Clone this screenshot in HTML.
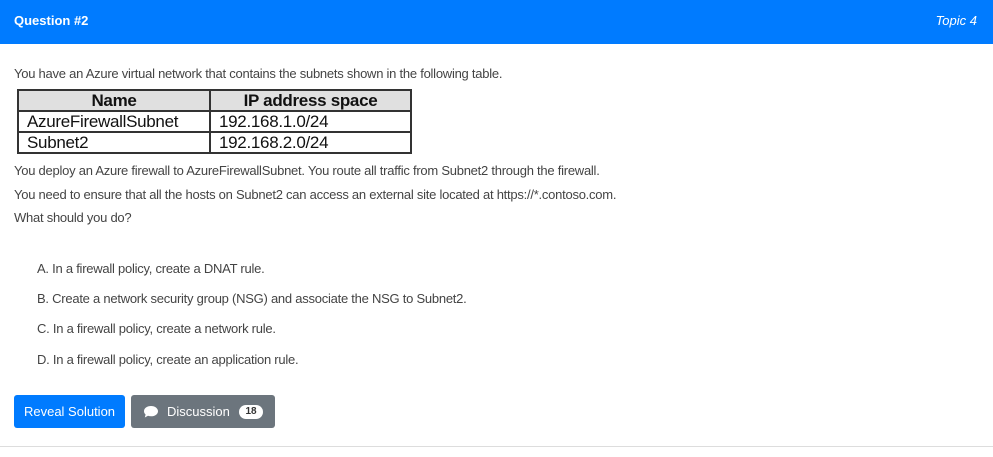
<!DOCTYPE html>
<html><head><style>
body{margin:0;width:993px;height:457px;background:#fff;font-family:"Liberation Sans",sans-serif;color:#444;overflow:hidden;position:relative}
.hdr{position:absolute;left:0;top:0;width:993px;height:44px;background:#007bff;color:#fff;font-size:13px}
.hdr .l{position:absolute;left:14px;top:13px;font-weight:bold}
.hdr .r{position:absolute;right:16px;top:13px;font-style:italic}
.t{position:absolute;left:14px;font-size:13px;white-space:nowrap;letter-spacing:-0.25px}
table{position:absolute;left:17px;top:89px;border-collapse:collapse;font-size:17px;color:#111;width:395px}
td{border:2px solid #333;padding:0 0 0 8px;height:19px;line-height:19px;letter-spacing:-0.3px}
tr.h td{background:#e0e0e0;font-weight:bold;text-align:center;padding:0}
.btn{position:absolute;top:395px;height:33px;border-radius:3px;color:#fff;font-size:13px;line-height:33px}
.b1{left:14px;width:111px;background:#007bff;text-align:center}
.b2{left:131px;width:144px;background:#6c757d}
.badge{position:absolute;left:108px;top:10px;width:24px;height:14px;border-radius:7px;background:#fff;color:#333;font-size:10px;line-height:14px;text-align:center;font-weight:bold}
.line{position:absolute;left:0;top:446px;width:993px;height:1px;background:#ddd}
</style></head><body>
<div class="hdr"><span class="l">Question #2</span><span class="r">Topic 4</span></div>
<div class="t" style="top:66px">You have an Azure virtual network that contains the subnets shown in the following table.</div>
<table>
<tr class="h"><td style="width:190px">Name</td><td>IP address space</td></tr>
<tr><td>AzureFirewallSubnet</td><td>192.168.1.0/24</td></tr>
<tr><td>Subnet2</td><td>192.168.2.0/24</td></tr>
</table>
<div class="t" style="top:163px">You deploy an Azure firewall to AzureFirewallSubnet. You route all traffic from Subnet2 through the firewall.</div>
<div class="t" style="top:187px">You need to ensure that all the hosts on Subnet2 can access an external site located at https://*.contoso.com.</div>
<div class="t" style="top:210px">What should you do?</div>
<div class="t" style="left:37px;top:261px">A. In a firewall policy, create a DNAT rule.</div>
<div class="t" style="left:37px;top:291px">B. Create a network security group (NSG) and associate the NSG to Subnet2.</div>
<div class="t" style="left:37px;top:321px">C. In a firewall policy, create a network rule.</div>
<div class="t" style="left:37px;top:352px">D. In a firewall policy, create an application rule.</div>
<div class="btn b1">Reveal Solution</div>
<div class="btn b2"><svg style="position:absolute;left:12px;top:10px" width="16" height="14" viewBox="0 0 16 14"><path d="M8 1C4 1 1 3.3 1 6.2c0 1.3.6 2.4 1.6 3.3L1.8 12.5 5 10.8c.9.3 1.9.5 3 .5 4 0 7-2.3 7-5.1S12 1 8 1z" fill="#fff"/></svg><span style="position:absolute;left:36px">Discussion</span><span class="badge">18</span></div>
<div class="line"></div>
</body></html>
